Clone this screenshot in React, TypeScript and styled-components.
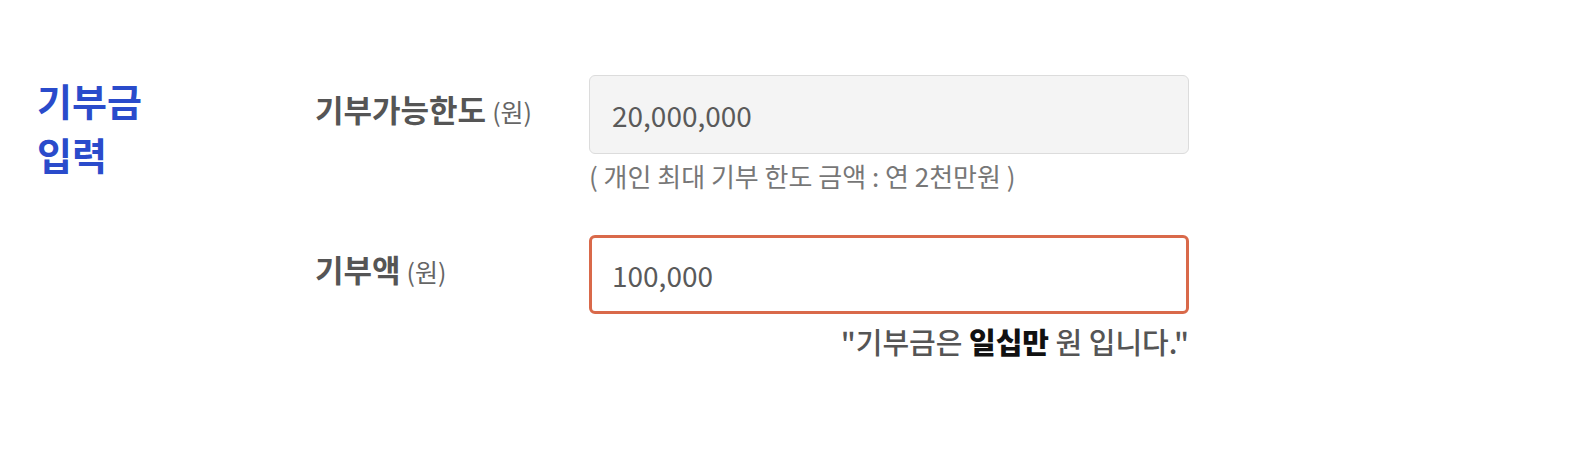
import React from 'react';
import styled, { createGlobalStyle } from 'styled-components';

const Global = createGlobalStyle`
  html, body { margin: 0; padding: 0; background: #ffffff; }
  body { font-family: "Noto Sans CJK KR", "Noto Sans", sans-serif; }
`;

const Section = styled.section`
  display: flex;
  align-items: flex-start;
  padding: 75px 0 0 37px;
`;

const Title = styled.h2`
  margin: -2px 0 0;
  width: 278px;
  flex: none;
  font-size: 38px;
  line-height: 54px;
  font-weight: 700;
  color: #2a4bcb;
`;

const Form = styled.div`
  display: flex;
  flex-direction: column;
  gap: 41px;
`;

const Row = styled.div`
  display: grid;
  grid-template-columns: 274px 600px;
  align-items: start;
`;

const Label = styled.label`
  padding-top: 11px;
  font-size: 31px;
  line-height: 45px;
  font-weight: 700;
  color: #555555;
`;

const Unit = styled.span`
  margin-left: 6px;
  font-size: 25px;
  font-weight: 400;
  color: #666666;
`;

const Field = styled.div`
  display: flex;
  flex-direction: column;
`;

const Input = styled.input<{ $error?: boolean }>`
  box-sizing: border-box;
  width: 600px;
  height: 79px;
  padding: 0 ${(p) => (p.$error ? '20px' : '22px')};
  border-radius: 6px;
  border: ${(p) => (p.$error ? '3px solid #d9694a' : '1px solid #dcdcdc')};
  background: ${(p) => (p.$error ? '#ffffff' : '#f4f4f4')};
  font-family: "Noto Sans CJK KR", "Noto Sans", sans-serif;
  font-size: 28px;
  color: #5a5a5a;
  outline: none;
`;

const Help = styled.p`
  margin: 4px 0 0;
  font-size: 26px;
  line-height: 36px;
  color: #777777;
`;

const Result = styled.p`
  margin: 7px 0 0;
  text-align: right;
  font-size: 29px;
  line-height: 40px;
  font-weight: 500;
  color: #555555;
`;

const Strong = styled.strong`
  font-weight: 800;
  color: #111111;
`;

export default function App() {
  return (
    <>
      <Global />
      <Section>
        <Title>
          기부금
          <br />
          입력
        </Title>
        <Form>
          <Row>
            <Label>
              기부가능한도<Unit>(원)</Unit>
            </Label>
            <Field>
              <Input readOnly value="20,000,000" />
              <Help>( 개인 최대 기부 한도 금액 : 연 2천만원 )</Help>
            </Field>
          </Row>
          <Row>
            <Label>
              기부액<Unit>(원)</Unit>
            </Label>
            <Field>
              <Input $error readOnly value="100,000" />
              <Result>
                "기부금은 <Strong>일십만</Strong> 원 입니다."
              </Result>
            </Field>
          </Row>
        </Form>
      </Section>
    </>
  );
}
